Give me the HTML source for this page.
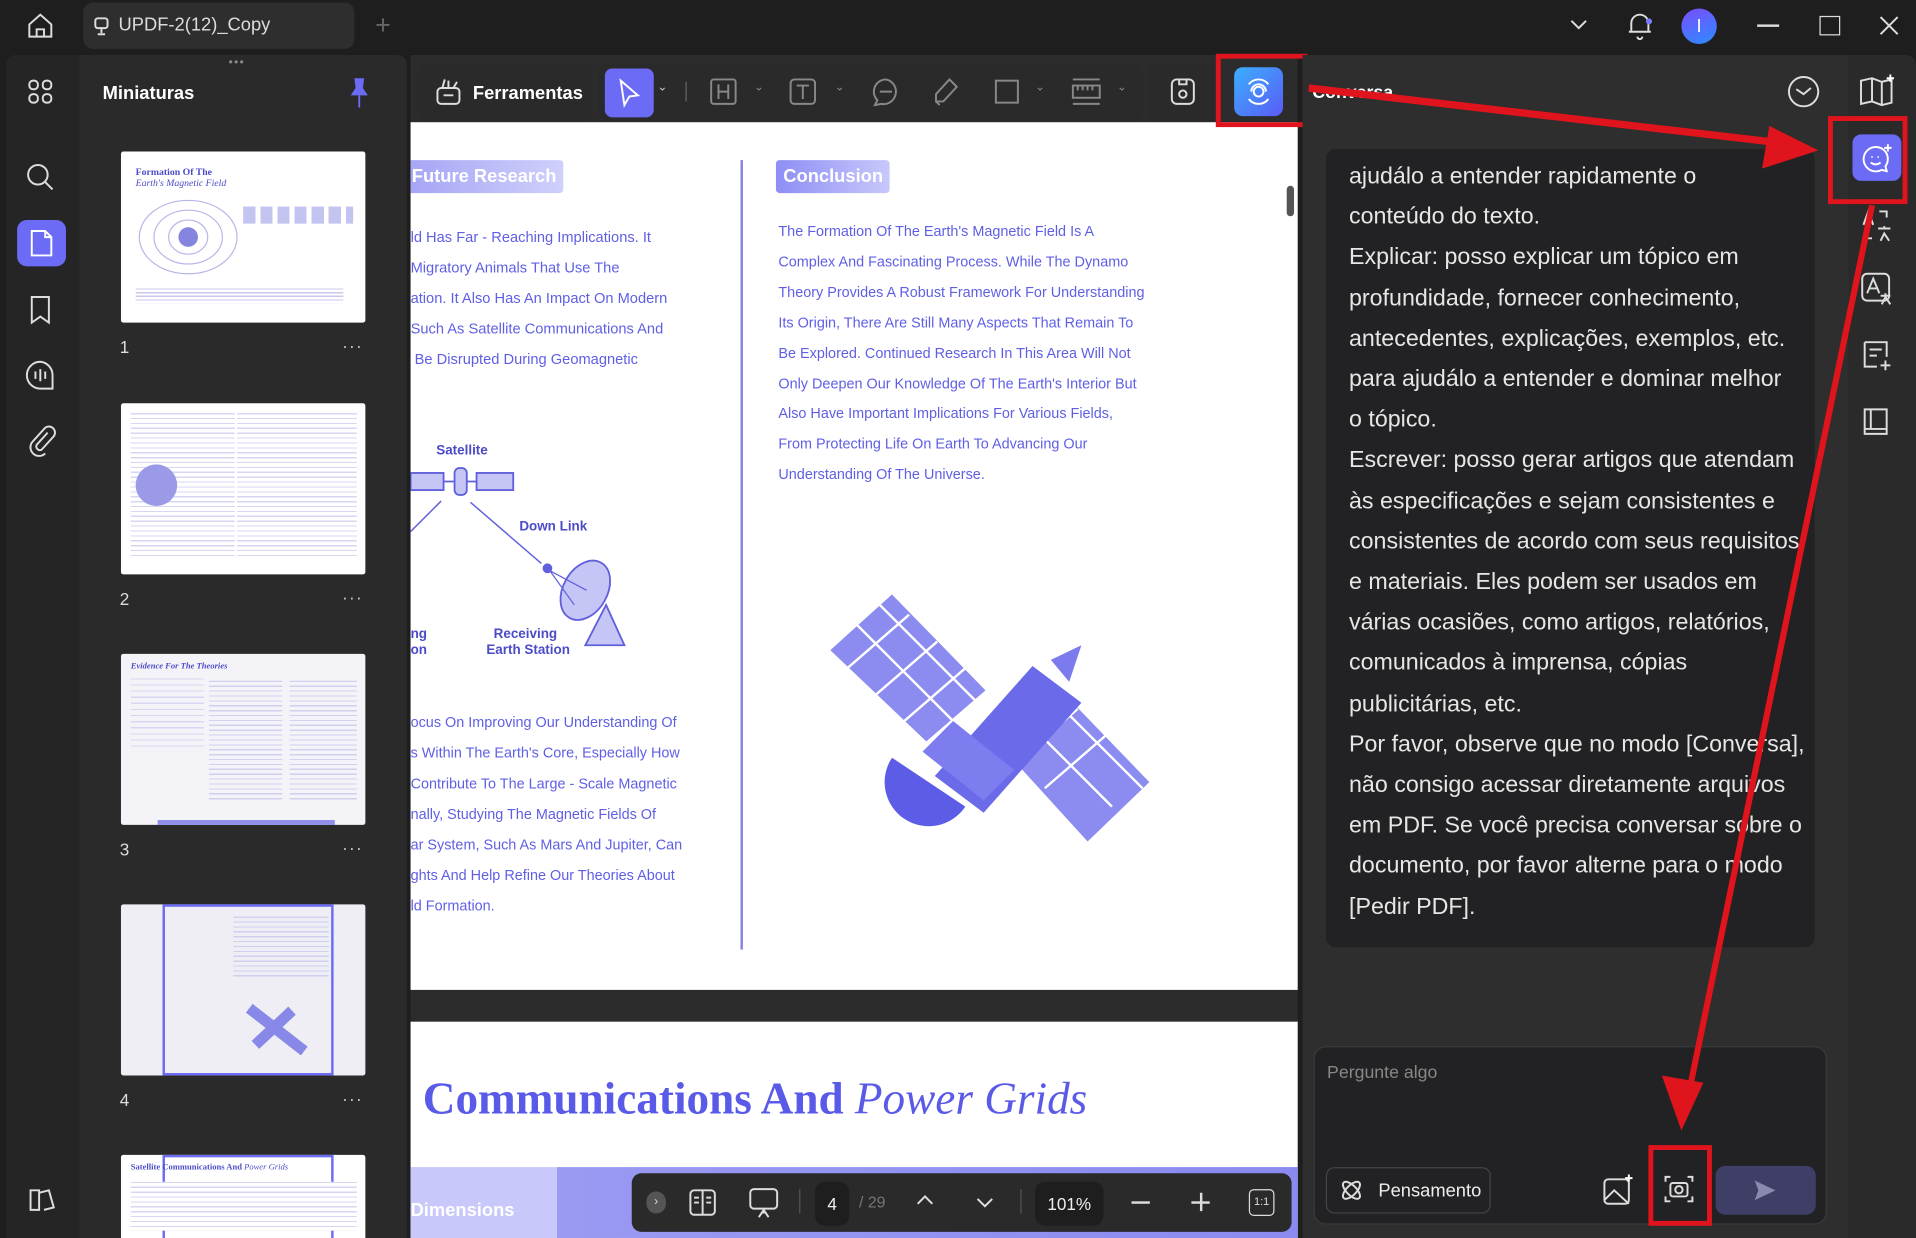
<!DOCTYPE html>
<html><head><meta charset="utf-8"><style>
*{margin:0;padding:0;box-sizing:border-box}
html,body{width:1916px;height:1238px;overflow:hidden;background:#1e1e1e}
#w{position:absolute;left:0;top:0;width:1568px;height:1013px;transform:scale(1.22194,1.2221);transform-origin:0 0;font-family:"Liberation Sans",sans-serif;background:#1e1e1e;overflow:hidden}
.a{position:absolute}
.ico{position:absolute;stroke:#ddd;fill:none;stroke-width:1.6}
.pt{position:absolute;color:#5f5fe6;font-size:12px;white-space:nowrap}
.chat{position:absolute;left:1104px;top:128px;color:#e6e6e6;font-size:19px;line-height:33.2px;font-family:"Liberation Sans",sans-serif;white-space:nowrap}
.th{position:absolute;left:99px;width:200px;height:140px;background:#fff;border-radius:2px}
.num{position:absolute;left:98px;color:#ddd;font-size:14px}
.dots{position:absolute;left:280px;color:#ccc;font-size:14px;letter-spacing:1px}
</style></head><body><div id="w">
<svg class="ico" style="left:20px;top:8px" width="26" height="26" viewBox="0 0 26 26"><path d="M4 12L13 4l9 8v10H4z M10 22v-6h6v6"/></svg>
<div class="a" style="left:68px;top:2px;width:222px;height:38px;background:#2e2e2e;border-radius:8px"></div>
<svg class="ico" style="left:76px;top:14px" width="14" height="16" viewBox="0 0 14 16" stroke-width="1.2"><rect x="2" y="1" width="10" height="8" rx="2"/><path d="M7 9v4M4 14h6"/></svg>
<div class="a" style="left:97px;top:12px;color:#ddd;font-size:15px">UPDF-2(12)_Copy</div>
<div class="a" style="left:307px;top:8px;color:#666;font-size:22px">+</div>
<svg class="ico" style="left:1283px;top:14px" width="18" height="12" viewBox="0 0 18 12"><path d="M3 3l6 6 6-6"/></svg>
<svg class="ico" style="left:1330px;top:8px" width="24" height="26" viewBox="0 0 24 26"><path d="M5 18V11a7 7 0 0114 0v7H5zM3 18h18M10 22a2 2 0 004 0"/></svg>
<div class="a" style="left:1347px;top:15px;width:5px;height:5px;border-radius:50%;background:#7a7aff"></div>
<div class="a" style="left:1376px;top:7px;width:29px;height:29px;border-radius:50%;background:linear-gradient(160deg,#7b4dff,#2b8cff);color:#fff;font-size:15px;text-align:center;line-height:29px">I</div>
<div class="a" style="left:1438px;top:20px;width:18px;height:1.5px;background:#ddd"></div>
<div class="a" style="left:1489px;top:13px;width:17px;height:16px;border:1.6px solid #ddd"></div>
<svg class="ico" style="left:1537px;top:12px" width="18" height="18" viewBox="0 0 18 18"><path d="M2 2l14 14M16 2L2 16"/></svg>

<div class="a" style="left:5px;top:45px;width:328px;height:968px;background:#2a2a2a;border-radius:8px 8px 0 0"></div>
<div class="a" style="left:5px;top:45px;width:60px;height:968px;background:#252525;border-radius:8px 0 0 0"></div>
<svg class="ico" style="left:22px;top:64px" width="22" height="22" viewBox="0 0 22 22"><rect x="2" y="2" width="7" height="7" rx="3"/><rect x="13" y="2" width="7" height="7" rx="3"/><rect x="2" y="13" width="7" height="7" rx="3"/><rect x="13" y="13" width="7" height="7" rx="3"/></svg>
<svg class="ico" style="left:20px;top:132px" width="26" height="26" viewBox="0 0 26 26"><circle cx="11" cy="11" r="8"/><path d="M17 17l6 6"/></svg>
<div class="a" style="left:14px;top:180px;width:40px;height:38px;background:#6b6bf5;border-radius:8px"></div>
<svg class="ico" style="left:23px;top:187px;stroke:#fff" width="22" height="24" viewBox="0 0 22 24"><path d="M3 2h11l5 5v15H3z M14 2v5h5"/></svg>
<svg class="ico" style="left:22px;top:241px" width="22" height="26" viewBox="0 0 22 26"><path d="M4 2h14v21l-7-5-7 5z"/></svg>
<svg class="ico" style="left:20px;top:294px" width="26" height="26" viewBox="0 0 26 26"><path d="M13 2a11 11 0 100 22h10V13A11 11 0 0013 2z M9 10v6M13 8v10M17 10v6"/></svg>
<svg class="ico" style="left:22px;top:346px" width="24" height="28" viewBox="0 0 24 28"><path d="M17 8L8 18a3 3 0 004 4l10-11a5 5 0 00-7-7L5 15a7 7 0 0010 10"/></svg>
<svg class="ico" style="left:21px;top:970px" width="26" height="24" viewBox="0 0 26 24"><path d="M4 4h7v16H4z M11 6l8-2 4 14-8 2"/></svg>

<div class="a" style="left:187px;top:46px;color:#888;font-size:10px;letter-spacing:1px">•••</div>
<div class="a" style="left:84px;top:68px;color:#fff;font-size:15px;font-weight:bold">Miniaturas</div>
<svg class="a" style="left:285px;top:62px" width="18" height="28" viewBox="0 0 18 28"><path d="M5 2h8l-1 8 4 6H2l4-6z" fill="#6b6bf5"/><path d="M9 16v10" stroke="#6b6bf5" stroke-width="1.5"/></svg>

<div class="th" style="top:124px">
 <div class="a" style="left:12px;top:12px;color:#4b4bc8;font:bold 8px 'Liberation Serif',serif">Formation Of The<br><i style="font-weight:normal">Earth's Magnetic Field</i></div>
 <svg class="a" style="left:10px;top:30px" width="90" height="80"><g fill="none" stroke="#b8b8e8"><ellipse cx="45" cy="40" rx="40" ry="30"/><ellipse cx="45" cy="40" rx="28" ry="22"/><ellipse cx="45" cy="40" rx="16" ry="14"/></g><circle cx="45" cy="40" r="8" fill="#8585e0"/></svg>
 <div class="a" style="left:100px;top:45px;width:90px;height:14px;background:repeating-linear-gradient(90deg,#c4c4f0 0 10px,#fff 10px 14px)"></div>
 <div class="a" style="left:12px;top:112px;width:170px;height:12px;background:repeating-linear-gradient(#c8c8ee 0 1px,#fff 1px 3px)"></div>
</div>
<div class="num" style="top:276px">1</div><div class="dots" style="top:275px">···</div>
<div class="th" style="top:330px">
 <div class="a" style="left:8px;top:8px;width:85px;height:118px;background:repeating-linear-gradient(#d6d6f2 0 1px,#fff 1px 4px)"></div>
 <div class="a" style="left:12px;top:50px;width:34px;height:34px;border-radius:50%;background:#9a9ae6"></div>
 <div class="a" style="left:95px;top:8px;width:98px;height:118px;background:repeating-linear-gradient(#d6d6f2 0 1px,#fff 1px 4px)"></div>
</div>
<div class="num" style="top:482px">2</div><div class="dots" style="top:481px">···</div>
<div class="th" style="top:535px;background:#f4f4f8">
 <div class="a" style="left:8px;top:6px;color:#4b4bc8;font:italic bold 7px 'Liberation Serif',serif">Evidence For The Theories</div>
 <div class="a" style="left:8px;top:20px;width:60px;height:60px;background:repeating-linear-gradient(#d6d6f2 0 1px,#f4f4f8 1px 5px)"></div>
 <div class="a" style="left:72px;top:22px;width:60px;height:100px;background:repeating-linear-gradient(#d0d0f0 0 1px,#f4f4f8 1px 4px)"></div>
 <div class="a" style="left:138px;top:22px;width:55px;height:100px;background:repeating-linear-gradient(#d0d0f0 0 1px,#f4f4f8 1px 4px)"></div>
 <div class="a" style="left:30px;top:136px;width:145px;height:4px;background:#8f8fe8"></div>
</div>
<div class="num" style="top:687px">3</div><div class="dots" style="top:686px">···</div>
<div class="th" style="top:740px;background:#eeeef4">
 <div class="a" style="left:34px;top:0;width:140px;height:140px;border:2px solid #6b6bf5"></div>
 <div class="a" style="left:92px;top:10px;width:78px;height:50px;background:repeating-linear-gradient(#cfcff0 0 1px,#eeeef4 1px 4px)"></div>
 <svg class="a" style="left:100px;top:75px" width="55" height="50"><path d="M5 10l45 35M10 40l30-28" stroke="#8888e8" stroke-width="9"/></svg>
</div>
<div class="num" style="top:892px">4</div><div class="dots" style="top:891px">···</div>
<div class="th" style="top:945px;height:70px">
 <div class="a" style="left:34px;top:0;width:140px;height:70px;border:2px solid #6b6bf5"></div>
 <div class="a" style="left:8px;top:6px;color:#4b4bc8;font:bold 7px 'Liberation Serif',serif">Satellite Communications And <i style="font-weight:normal">Power Grids</i></div>
 <div class="a" style="left:8px;top:22px;width:185px;height:40px;background:repeating-linear-gradient(#d6d6f2 0 1px,#fff 1px 4px)"></div>
</div>

<div class="a" style="left:336px;top:45px;width:726px;height:968px;background:#2c2c2c"></div>
<div class="a" style="left:336px;top:100px;width:726px;height:710px;background:#fff"></div>
<div class="a" style="left:336px;top:836px;width:726px;height:177px;background:#fff"></div>
<div class="a" style="left:336px;top:955px;width:726px;height:58px;background:linear-gradient(90deg,#c8c8fa 0,#c8c8fa 120px,#9a9af3 120px,#8a8af0 100%)"></div>
<div class="a" style="left:336px;top:982px;color:#fff;font-size:15px;font-weight:bold">Dimensions</div>
<div class="a" style="left:346px;top:878px;color:#5a5ae8;font:bold 37px 'Liberation Serif',serif;white-space:nowrap">Communications And <i style="font-weight:normal">Power Grids</i></div>

<div class="a" style="left:336px;top:131px;width:125px;height:27px;background:linear-gradient(90deg,#a6a6f5,#d0d0fc);border-radius:0 3px 3px 0;color:#fff;font-size:15px;font-weight:bold;line-height:27px;padding-left:1px">Future Research</div>
<div class="a" style="left:635px;top:131px;width:93px;height:27px;background:linear-gradient(90deg,#8e8ef5,#c8c8fc);border-radius:3px;color:#fff;font-size:15px;font-weight:bold;line-height:27px;padding-left:6px">Conclusion</div>
<div class="a" style="left:606px;top:131px;width:2px;height:646px;background:#8585e0"></div>
<div class="pt" style="left:336px;top:182px;line-height:25px">ld Has Far - Reaching Implications. It<br>Migratory Animals That Use The<br>ation. It Also Has An Impact On Modern<br>Such As Satellite Communications And<br>&nbsp;Be Disrupted During Geomagnetic</div>
<div class="pt" style="left:637px;top:177px;line-height:24.9px;font-size:11.8px">The Formation Of The Earth's Magnetic Field Is A<br>Complex And Fascinating Process. While The Dynamo<br>Theory Provides A Robust Framework For Understanding<br>Its Origin, There Are Still Many Aspects That Remain To<br>Be Explored. Continued Research In This Area Will Not<br>Only Deepen Our Knowledge Of The Earth's Interior But<br>Also Have Important Implications For Various Fields,<br>From Protecting Life On Earth To Advancing Our<br>Understanding Of The Universe.</div>
<div class="pt" style="left:336px;top:579px;line-height:25px;font-size:11.8px">ocus On Improving Our Understanding Of<br>s Within The Earth's Core, Especially How<br>Contribute To The Large - Scale Magnetic<br>nally, Studying The Magnetic Fields Of<br>ar System, Such As Mars And Jupiter, Can<br>ghts And Help Refine Our Theories About<br>ld Formation.</div>
<svg class="a" style="left:336px;top:355px" width="200" height="190" font-family="Liberation Sans" font-size="11" font-weight="bold" fill="#4b4bc8">
<text x="21" y="17">Satellite</text>
<rect x="0" y="32" width="27" height="14" fill="#c6c6f6" stroke="#6060dd" stroke-width="1.5"/>
<rect x="54" y="32" width="30" height="14" fill="#c6c6f6" stroke="#6060dd" stroke-width="1.5"/>
<rect x="36" y="28" width="10" height="22" rx="4" fill="#c6c6f6" stroke="#6060dd" stroke-width="1.5"/>
<path d="M27 39h9M46 39h8" stroke="#6060dd" stroke-width="1.5"/>
<path d="M0 80L25 55M49 56l58 50" stroke="#6060dd" stroke-width="1.2"/>
<text x="89" y="79">Down Link</text>
<ellipse cx="143" cy="128" rx="18" ry="26" transform="rotate(30 143 128)" fill="#c6c6f6" stroke="#6060dd" stroke-width="1.5"/>
<path d="M114 112l30 16M114 112l20 28" stroke="#6060dd" stroke-width="1"/>
<path d="M160 140l15 33h-32z" fill="#c6c6f6" stroke="#6060dd" stroke-width="1.5"/>
<circle cx="112" cy="110" r="4" fill="#6060dd"/>
<text x="68" y="167">Receiving</text><text x="62" y="180">Earth Station</text>
<text x="0" y="167">ng</text><text x="0" y="180">on</text>
</svg>
<svg class="a" style="left:670px;top:480px" width="280" height="240">
<g fill="#8b8bf0" stroke="#fff" stroke-width="2">
<path d="M8 52L60 5 138 85 88 128z"/>
<path d="M138 120l52-45 82 85-52 50z"/>
</g>
<path d="M30 30l80 80M50 15l80 80M22 68l52-45M45 90l52-45M70 110l52-45M160 100l80 80M185 85l80 80M160 145l52-45M185 165l52-45" stroke="#fff" stroke-width="2"/>
<path d="M95 155l80-90 40 30-80 90z" fill="#6b6bea"/>
<path d="M190 60l25-12-10 30z" fill="#7b7bee"/>
<path d="M60 140a35 35 0 0060 40z" fill="#5c5ce6"/>
<path d="M110 110l50 40-25 25-50-40z" fill="#7d7df0"/>
</svg>
<div class="a" style="left:1053px;top:152px;width:6px;height:25px;border-radius:3px;background:#555"></div>

<div class="a" style="left:341px;top:52px;width:144px;height:47px;background:#2a2a2a;border-radius:8px"></div>
<svg class="ico" style="left:355px;top:62px" width="24" height="26" viewBox="0 0 24 26"><rect x="3" y="10" width="18" height="13" rx="3"/><path d="M8 16h8M7 10l2-7M12 10V4M16 10l3-5"/></svg>
<div class="a" style="left:387px;top:68px;color:#fff;font-size:15px;font-weight:bold">Ferramentas</div>
<div class="a" style="left:489px;top:52px;width:447px;height:47px;background:#2a2a2a;border-radius:8px"></div>
<div class="a" style="left:495px;top:56px;width:40px;height:40px;background:#6b6bf5;border-radius:6px"></div>
<svg class="ico" style="left:503px;top:63px;stroke:#fff" width="24" height="26" viewBox="0 0 24 26"><path d="M5 3l14 12-7 1-4 7z"/></svg>
<div class="a" style="left:538px;top:66px;color:#ccc;font-size:10px">⌄</div>
<div class="a" style="left:561px;top:67px;width:1px;height:16px;background:#666"></div>
<svg class="ico" style="left:580px;top:63px;stroke:#888" width="24" height="24" viewBox="0 0 24 24"><rect x="2" y="2" width="20" height="20" rx="2"/><path d="M8 6v12M16 6v12M8 12h8"/></svg>
<svg class="ico" style="left:645px;top:63px;stroke:#888" width="24" height="24" viewBox="0 0 24 24"><rect x="2" y="2" width="20" height="20" rx="3"/><path d="M7 7h10M12 7v11"/></svg>
<svg class="ico" style="left:712px;top:63px;stroke:#888" width="26" height="24" viewBox="0 0 26 24"><path d="M13 2a10 10 0 00-7 17l-2 4 5-1a10 10 0 104-20zM8 12h10"/></svg>
<svg class="ico" style="left:762px;top:62px;stroke:#888" width="24" height="26" viewBox="0 0 24 26"><path d="M15 3l6 6-11 12H4v-6zM4 21l3 3"/></svg>
<svg class="ico" style="left:813px;top:64px;stroke:#888" width="22" height="22" viewBox="0 0 22 22"><rect x="2" y="2" width="18" height="18"/></svg>
<svg class="ico" style="left:876px;top:62px;stroke:#888" width="26" height="26" viewBox="0 0 26 26"><path d="M2 3h22M2 23h22"/><rect x="2" y="8" width="22" height="10"/><path d="M6 8v4M10 8v4M14 8v4M18 8v4"/></svg>
<div class="a" style="left:617px;top:66px;color:#888;font-size:10px">⌄</div><div class="a" style="left:683px;top:66px;color:#888;font-size:10px">⌄</div><div class="a" style="left:847px;top:66px;color:#888;font-size:10px">⌄</div><div class="a" style="left:914px;top:66px;color:#888;font-size:10px">⌄</div>
<div class="a" style="left:940px;top:52px;width:55px;height:47px;background:#2a2a2a;border-radius:8px 0 0 8px"></div>
<svg class="ico" style="left:957px;top:62px" width="22" height="26" viewBox="0 0 22 26"><rect x="2" y="3" width="18" height="20" rx="4"/><circle cx="11" cy="15" r="3"/><path d="M8 3v4h6V3"/></svg>
<div class="a" style="left:995px;top:44px;width:75px;height:60px;border:4px solid #e0141c"></div>
<div class="a" style="left:1010px;top:55px;width:40px;height:40px;border-radius:7px;background:linear-gradient(135deg,#3bb0ff,#5a5af5)"></div>
<svg class="ico" style="left:1016px;top:61px;stroke:#fff" width="28" height="28" viewBox="0 0 28 28"><circle cx="14" cy="14" r="4"/><path d="M6 8a10 10 0 0116 0M22 20a10 10 0 01-16 0M8 14a6 6 0 0112 0"/></svg>

<div class="a" style="left:1066px;top:45px;width:447px;height:968px;background:#2e2e2e"></div>
<div class="a" style="left:1513px;top:45px;width:55px;height:968px;background:#2a2a2a;border-radius:0 8px 0 0"></div>
<div class="a" style="left:1074px;top:68px;color:#fff;font-size:14.5px;font-weight:bold">Conversa</div>
<svg class="ico" style="left:1462px;top:61px" width="28" height="28" viewBox="0 0 28 28"><circle cx="14" cy="14" r="12"/><path d="M8 12l6 4 6-5"/></svg>
<svg class="ico" style="left:1520px;top:60px" width="32" height="28" viewBox="0 0 32 28"><path d="M3 6l9-2 8 3 8-2v19l-8 2-8-3-9 2zM12 4v19M20 7v19"/><path d="M27 1v6M24 4h6" stroke="#fff"/></svg>
<div class="a" style="left:1085px;top:122px;width:400px;height:653px;background:#222224;border-radius:8px"></div>
<div class="chat">ajudálo a entender rapidamente o<br>conteúdo do texto.<br>Explicar: posso explicar um tópico em<br>profundidade, fornecer conhecimento,<br>antecedentes, explicações, exemplos, etc.<br>para ajudálo a entender e dominar melhor<br>o tópico.<br>Escrever: posso gerar artigos que atendam<br>às especificações e sejam consistentes e<br>consistentes de acordo com seus requisitos<br>e materiais. Eles podem ser usados em<br>várias ocasiões, como artigos, relatórios,<br>comunicados à imprensa, cópias<br>publicitárias, etc.<br>Por favor, observe que no modo [Conversa],<br>não consigo acessar diretamente arquivos<br>em PDF. Se você precisa conversar sobre o<br>documento, por favor alterne para o modo<br>[Pedir PDF].</div>

<div class="a" style="left:1496px;top:95px;width:65px;height:72px;border:4px solid #e0141c"></div>
<div class="a" style="left:1516px;top:110px;width:40px;height:38px;background:#6b6bf5;border-radius:7px"></div>
<svg class="ico" style="left:1520px;top:113px;stroke:#fff" width="32" height="32" viewBox="0 0 32 32"><path d="M22 10a10 10 0 10-2 16l4 1-1-4a10 10 0 00-1-13z"/><path d="M11 20q4 3 8 0M12 15v1M17 15v1"/><path d="M25 5v6M22 8h6"/></svg>
<svg class="ico" style="left:1522px;top:170px" width="28" height="28" viewBox="0 0 28 28"><path d="M3 14l4-11 4 11M4 10h6M16 3h6v5M4 20v5h6M15 17h10M20 15v2M17 27l3-6 4 6"/></svg>
<svg class="ico" style="left:1522px;top:222px" width="28" height="28" viewBox="0 0 28 28"><rect x="2" y="2" width="22" height="22" rx="4"/><path d="M6 18l5-12 5 12M8 14h6M17 20h8M21 18v2M18 27l3-6 4 6"/></svg>
<svg class="ico" style="left:1522px;top:277px" width="28" height="28" viewBox="0 0 28 28"><path d="M4 3h18v12M4 3v20h10M8 9h10M8 14h6"/><path d="M21 18v8M17 22h8"/></svg>
<svg class="ico" style="left:1522px;top:331px" width="28" height="28" viewBox="0 0 28 28"><path d="M4 4h18v20H4zM4 20h18M9 4v16"/></svg>

<div class="a" style="left:1075px;top:856px;width:420px;height:146px;background:#222224;border:1px solid #3a3a3a;border-radius:10px"></div>
<div class="a" style="left:1086px;top:870px;color:#888;font-size:14.5px">Pergunte algo</div>
<div class="a" style="left:1085px;top:955px;width:135px;height:38px;border:1px solid #444;border-radius:7px"></div>
<svg class="ico" style="left:1096px;top:964px" width="20" height="20" viewBox="0 0 20 20"><ellipse cx="10" cy="10" rx="4" ry="9" transform="rotate(45 10 10)"/><ellipse cx="10" cy="10" rx="4" ry="9" transform="rotate(-45 10 10)"/></svg>
<div class="a" style="left:1128px;top:966px;color:#eee;font-size:15px">Pensamento</div>
<svg class="ico" style="left:1310px;top:960px" width="28" height="28" viewBox="0 0 28 28"><rect x="3" y="5" width="20" height="20" rx="3"/><path d="M3 22l8-8 12 11"/><path d="M23 1v6M20 4h6" stroke="#fff"/></svg>
<div class="a" style="left:1349px;top:937px;width:52px;height:66px;border:4px solid #e0141c"></div>
<svg class="ico" style="left:1360px;top:959px" width="28" height="28" viewBox="0 0 28 28"><path d="M3 8V4h4M21 4h4v4M3 20v4h4M25 20v4h-4"/><rect x="7" y="9" width="14" height="11" rx="2"/><circle cx="14" cy="14.5" r="3"/></svg>
<div class="a" style="left:1404px;top:954px;width:82px;height:40px;background:#3e3e66;border-radius:8px"></div>
<svg class="a" style="left:1434px;top:964px" width="20" height="20" viewBox="0 0 20 20"><path d="M2 2l17 8-17 8 3-8z" fill="#8a8ab0"/></svg>

<div class="a" style="left:517px;top:960px;width:540px;height:48px;background:#2a2a2a;border-radius:8px"></div>
<div class="a" style="left:529px;top:975px;width:16px;height:18px;background:#555;border-radius:8px;color:#ddd;font-size:10px;text-align:center;line-height:18px">›</div>
<svg class="ico" style="left:563px;top:972px" width="24" height="24" viewBox="0 0 24 24"><rect x="2" y="2" width="20" height="20" rx="3"/><path d="M12 2v20M5 8h4M5 12h4M15 8h4M15 12h4"/></svg>
<svg class="ico" style="left:611px;top:970px" width="28" height="28" viewBox="0 0 28 28"><rect x="3" y="3" width="22" height="16" rx="3"/><path d="M14 19v4M10 26l4-6 4 6"/></svg>
<div class="a" style="left:654px;top:973px;width:1px;height:20px;background:#555"></div>
<div class="a" style="left:667px;top:967px;width:28px;height:36px;background:#1e1e1e;border-radius:8px;color:#eee;font-size:14px;text-align:center;line-height:36px">4</div>
<div class="a" style="left:703px;top:976px;color:#777;font-size:13px">/ 29</div>
<svg class="ico" style="left:748px;top:975px" width="18" height="14" viewBox="0 0 18 14"><path d="M3 10l6-6 6 6"/></svg>
<svg class="ico" style="left:797px;top:977px" width="18" height="14" viewBox="0 0 18 14"><path d="M3 4l6 6 6-6"/></svg>
<div class="a" style="left:835px;top:973px;width:1px;height:20px;background:#555"></div>
<div class="a" style="left:847px;top:967px;width:56px;height:36px;background:#1e1e1e;border-radius:8px;color:#eee;font-size:14px;text-align:center;line-height:36px">101%</div>
<div class="a" style="left:926px;top:983px;width:15px;height:1.6px;background:#ddd"></div>
<div class="a" style="left:975px;top:983px;width:15px;height:1.6px;background:#ddd"></div><div class="a" style="left:982px;top:976px;width:1.6px;height:15px;background:#ddd"></div>
<div class="a" style="left:1022px;top:973px;width:21px;height:22px;border:1.5px solid #ddd;border-radius:4px;color:#ddd;font-size:9px;text-align:center;line-height:19px">1:1</div>

<svg class="a" style="left:0;top:0" width="1568" height="1013">
<path d="M1071 72L1458 117" stroke="#e0141c" stroke-width="6"/>
<path d="M1488 123l-40-20-6 35z" fill="#e0141c"/>
<path d="M1532 168L1383 890" stroke="#e0141c" stroke-width="5"/>
<path d="M1376 925l-16-45 34 6z" fill="#e0141c"/>
</svg>
</div></body></html>
